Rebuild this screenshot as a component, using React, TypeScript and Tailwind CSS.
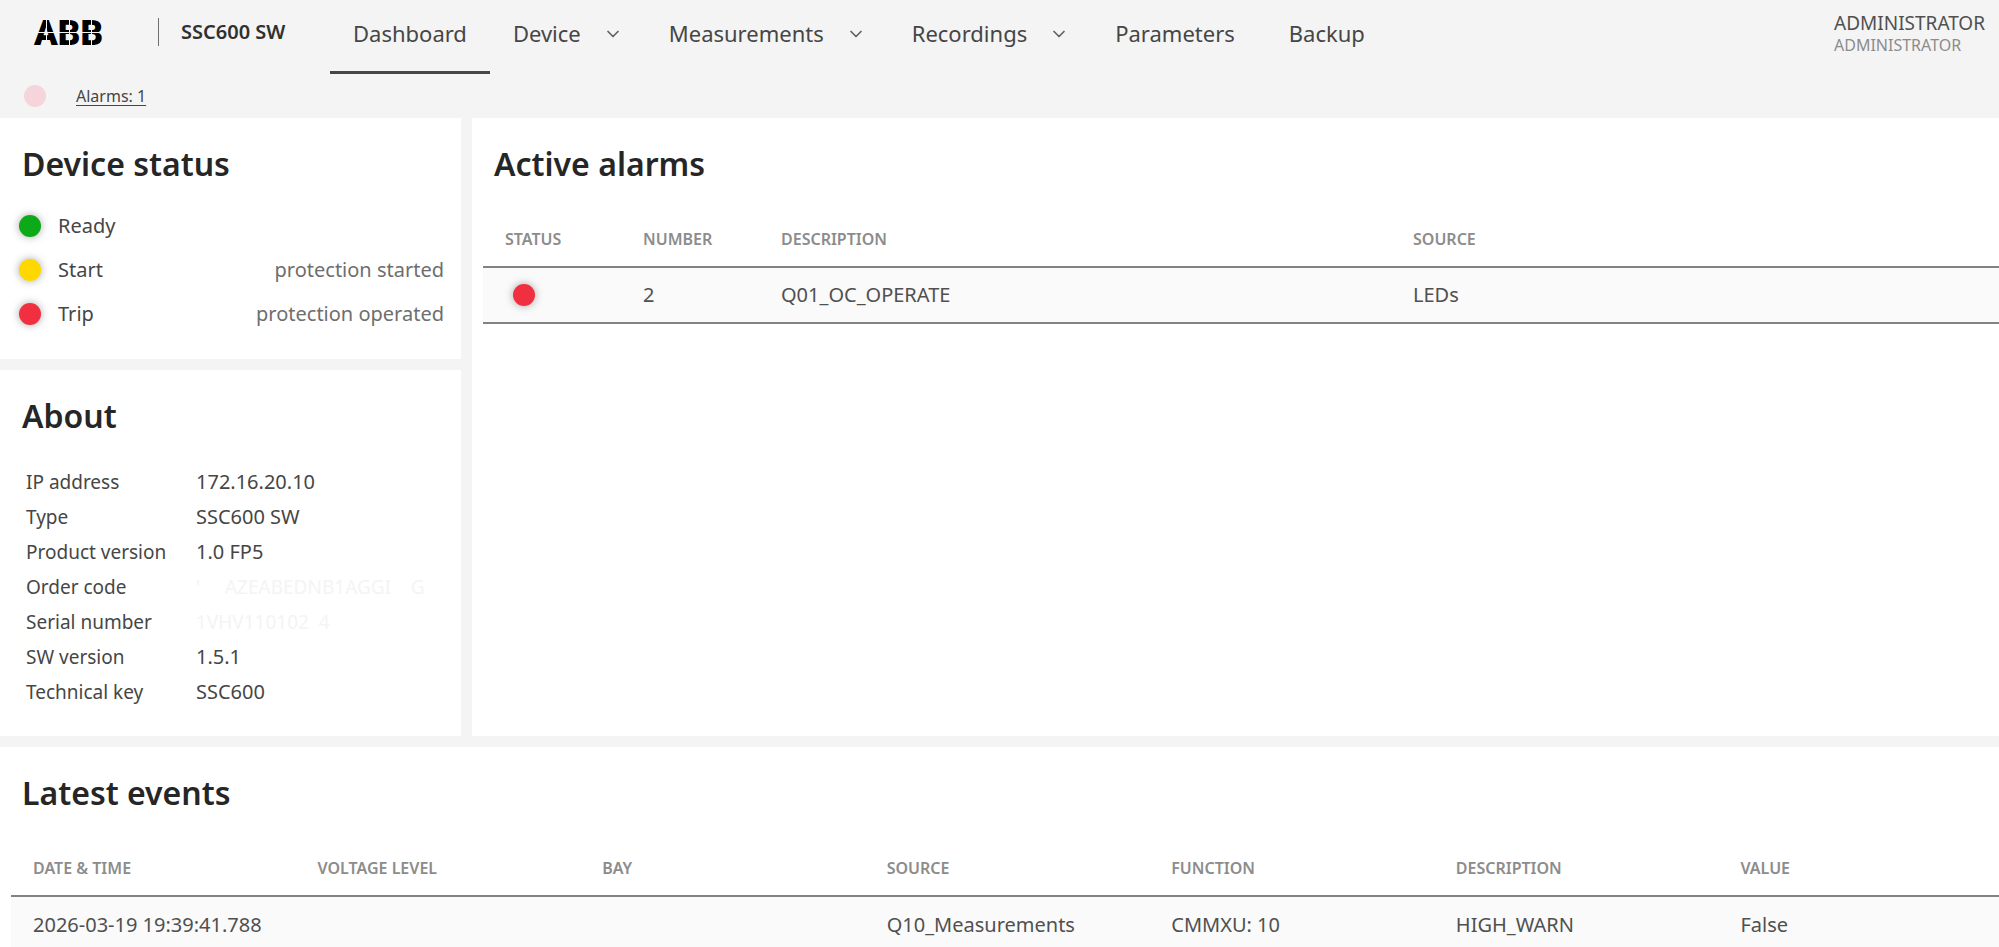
import { ChevronDown } from 'lucide-react';
import clsx from 'clsx';

type NavItem = {
  label: string;
  active?: boolean;
  menu?: boolean;
}

const navItems: NavItem[] = [
  { label: 'Dashboard', active: true },
  { label: 'Device', menu: true },
  { label: 'Measurements', menu: true },
  { label: 'Recordings', menu: true },
  { label: 'Parameters' },
  { label: 'Backup' },
];

const statusItems = [
  { label: 'Ready', color: 'bg-[#0ca919]', note: '' },
  { label: 'Start', color: 'bg-[#ffd800]', note: 'protection started' },
  { label: 'Trip', color: 'bg-[#f03040]', note: 'protection operated' },
];

const aboutItems = [
  { label: 'IP address', value: '172.16.20.10' },
  { label: 'Type', value: 'SSC600 SW' },
  { label: 'Product version', value: '1.0 FP5' },
  { label: 'Order code', value: "'     AZEABEDNB1AGGI    G", masked: true },
  { label: 'Serial number', value: '1VHV110102  4', masked: true },
  { label: 'SW version', value: '1.5.1' },
  { label: 'Technical key', value: 'SSC600' },
];

const alarmColumns = [
  { label: 'STATUS', width: 'w-[138px]' },
  { label: 'NUMBER', width: 'w-[138px]' },
  { label: 'DESCRIPTION', width: 'w-[632px]' },
  { label: 'SOURCE', width: '' },
];

const eventColumns = ['DATE & TIME', 'VOLTAGE LEVEL', 'BAY', 'SOURCE', 'FUNCTION', 'DESCRIPTION', 'VALUE'];
const events = [
  ['2026-03-19 19:39:41.788', '', '', 'Q10_Measurements', 'CMMXU: 10', 'HIGH_WARN', 'False'],
];

const thClass = "h-[55px] px-[22px] text-left text-base font-semibold text-[#8c8c8c]";
const tdClass = "h-14 px-[22px] text-xl whitespace-nowrap text-[#505050]";

function Led({ className }: { className: string }) {
  return <span className={clsx('block size-[22px] shrink-0 rounded-full', className)} />;
}

function Logo() {
  return (
    <svg className="overflow-visible" width="70" height="48" viewBox="0 0 70 48" role="img" aria-label="ABB">
      <text x="0" y="37" fontFamily="Roboto" fontWeight="900" fontSize="35">ABB</text>
      <path d="M0 24.5H70M12.5 11V38M35.5 11V38M57.5 11V38" stroke="#f4f4f4" strokeWidth="1" />
    </svg>
  );
}

function Header() {
  return (
    <header className="h-[118px] bg-[#f4f4f4]">
      <div className="flex h-[74px] items-start">
        <div className="flex h-16 w-[330px] shrink-0 items-center pl-[34px]">
          <Logo />
          <span className="ml-[54px] h-7 w-px bg-[#6e6e6e]" />
          <span className="ml-[22px] text-xl font-semibold text-[#303030]">SSC600 SW</span>
        </div>
        <nav className="flex">
          {navItems.map((item) => (
            <button
              key={item.label}
              type="button"
              className={clsx(
                'flex h-[74px] items-center border-b-3 px-[23px] pb-1 text-[22px] text-[#464646] last:ml-2',
                item.active ? 'border-[#464646]' : 'border-transparent'
              )}
            >
              {item.label}
              {item.menu && <ChevronDown className="ml-[22px] size-5 text-[#606060]" strokeWidth={2} />}
            </button>
          ))}
        </nav>
        <div className="ml-auto w-[165px] pt-3">
          <p className="text-[19px] leading-[22px] text-[#505050]">ADMINISTRATOR</p>
          <p className="text-base leading-[22px] text-[#8c8c8c]">ADMINISTRATOR</p>
        </div>
      </div>
      <div className="flex h-11 items-center pl-6">
        <Led className="bg-[#f5d5db]" />
        <a href="#alarms" className="ml-[30px] text-base text-[#464646] underline underline-offset-3">Alarms: 1</a>
      </div>
    </header>
  );
}

function Title({ children }: { children: string }) {
  return <h2 className="text-[32px] leading-10 font-semibold text-[#262626]">{children}</h2>;
}

export default function App() {
  return (
    <div className="flex h-screen flex-col overflow-hidden bg-[#f4f4f4] font-['Noto_Sans',sans-serif]">
      <Header />
      <main className="flex flex-1 flex-col gap-[11px]">
        <div className="grid grid-cols-[461px_1fr] gap-[11px]">
          <div className="flex flex-col gap-[11px]">
            <section className="h-[241px] bg-white pt-[26px] pr-[17px] pl-[22px]">
              <Title>Device status</Title>
              <ul className="mt-5">
                {statusItems.map((item) => (
                  <li key={item.label} className="flex h-11 items-center text-xl text-[#464646]">
                    <Led className={clsx('-ml-[3px] shadow-[0_0_8px_rgba(0,0,0,0.35)]', item.color)} />
                    <span className="ml-[17px]">{item.label}</span>
                    <span className="ml-auto text-[#6e6e6e]">{item.note}</span>
                  </li>
                ))}
              </ul>
            </section>
            <section className="h-[366px] bg-white pt-[26px] pl-[22px]">
              <Title>About</Title>
              <table className="mt-7 ml-1 text-[19px] text-[#464646]">
                <tbody>
                  {aboutItems.map((item) => (
                    <tr key={item.label}>
                      <th scope="row" className="h-[35px] w-[170px] p-0 text-left leading-6 font-normal">{item.label}</th>
                      <td className={clsx('p-0 leading-6 whitespace-pre', item.masked ? 'text-[#f4f4f4]' : 'text-xl/6')}>{item.value}</td>
                    </tr>
                  ))}
                </tbody>
              </table>
            </section>
          </div>
          <section id="alarms" className="bg-white pt-[26px] pl-[11px]">
            <div className="pl-[11px]"><Title>Active alarms</Title></div>
            <table className="mt-7 w-full table-fixed border-collapse">
              <thead>
                <tr className="border-b-2 border-[#808380]">
                  {alarmColumns.map((col) => (
                    <th key={col.label} className={clsx(thClass, col.width)}>{col.label}</th>
                  ))}
                </tr>
              </thead>
              <tbody>
                <tr className="border-b-2 border-[#808380] bg-[#fafafa]">
                  <td className="h-14 px-[30px]"><Led className="bg-[#f03040] shadow-[0_0_8px_rgba(0,0,0,0.35)]" /></td>
                  <td className={tdClass}>2</td>
                  <td className={tdClass}>Q01_OC_OPERATE</td>
                  <td className={tdClass}>LEDs</td>
                </tr>
              </tbody>
            </table>
          </section>
        </div>
        <section className="-mr-1 flex-1 bg-white pt-[26px] pl-[11px]">
          <div className="pl-[11px]"><Title>Latest events</Title></div>
          <table className="mt-7 w-full table-fixed border-collapse">
            <thead>
              <tr className="border-b-2 border-[#808380]">
                {eventColumns.map((col) => (
                  <th key={col} className={thClass}>{col}</th>
                ))}
              </tr>
            </thead>
            <tbody>
              {events.map((row) => (
                <tr key={row[0]} className="bg-[#fafafa]">
                  {row.map((cell, i) => (
                    <td key={i} className={tdClass}>{cell}</td>
                  ))}
                </tr>
              ))}
            </tbody>
          </table>
        </section>
      </main>
    </div>
  );
}
